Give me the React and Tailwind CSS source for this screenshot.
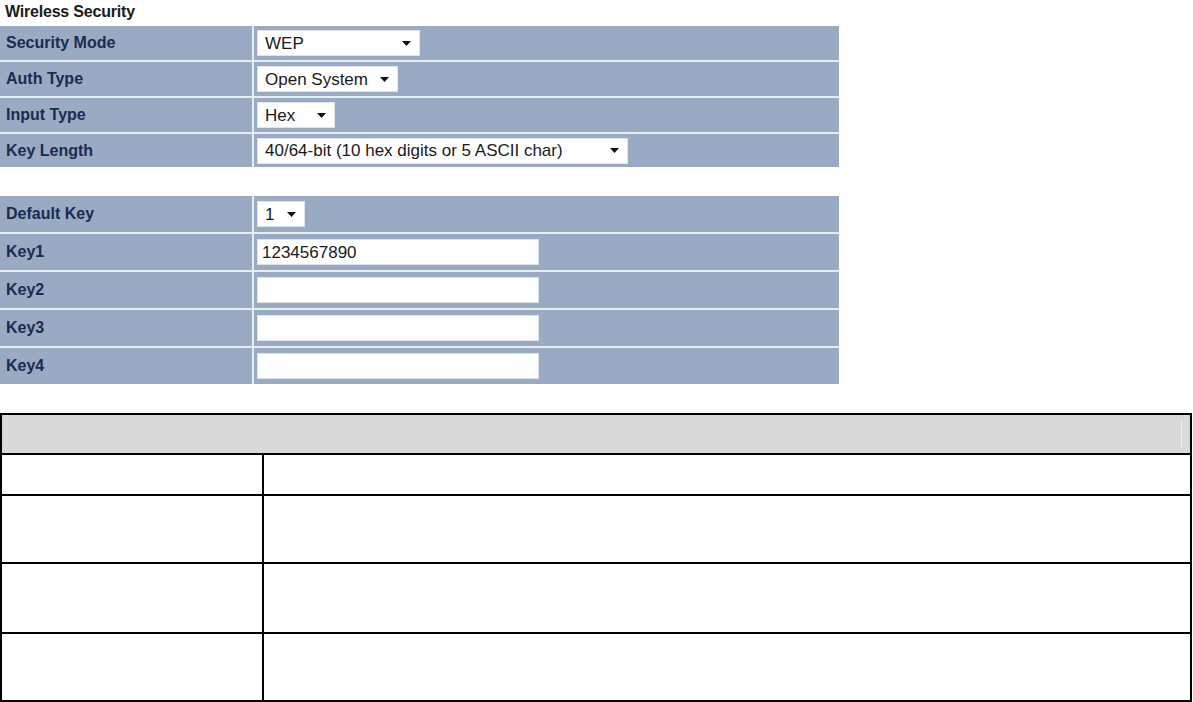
import React from "react";

function Arrow() {
  return (
    <svg width="9" height="5" viewBox="0 0 9 5" className="shrink-0">
      <polygon points="0,0 9,0 4.5,5" fill="#111" />
    </svg>
  );
}

function Select({ text, w }) {
  return (
    <div
      className="h-[26px] bg-white border border-[#dfe3ea] flex items-center justify-between pl-[7px] pr-[8px] text-[17px] text-[#1a1a1a] leading-none"
      style={{ width: w }}
    >
      <span>{text}</span>
      <Arrow />
    </div>
  );
}

function Input({ value }) {
  return (
    <div className="w-[282px] h-[26px] bg-white border border-[#dfe3ea] flex items-center pl-[4px] text-[17px] text-[#1a1a1a] leading-none">
      {value}
    </div>
  );
}

function Row({ label, children, h }) {
  return (
    <div className="flex gap-[2px]" style={{ height: h }}>
      <div className="w-[252px] bg-[#9aaac2] flex items-center pl-[6px] text-[16px] font-bold text-[#1a2b52]">
        {label}
      </div>
      <div className="w-[585px] bg-[#9aaac2] flex items-center pl-[3px]">{children}</div>
    </div>
  );
}

export default function App() {
  return (
    <div
      className="w-[1193px] h-[702px] bg-white overflow-hidden"
      style={{ fontFamily: '"Liberation Sans", Arial, sans-serif' }}
    >
      <div className="h-[26px] pl-[5px] pt-[3px] text-[16px] font-bold text-[#1a1a1a] leading-[18px] tracking-[-0.2px]">
        Wireless Security
      </div>
      <div className="w-[839px] bg-[#e6eef2] flex flex-col gap-[2px]">
        <Row label="Security Mode" h={34}>
          <Select text="WEP" w={163} />
        </Row>
        <Row label="Auth Type" h={34}>
          <Select text="Open System" w={141} />
        </Row>
        <Row label="Input Type" h={34}>
          <Select text="Hex" w={78} />
        </Row>
        <Row label="Key Length" h={33}>
          <Select text="40/64-bit (10 hex digits or 5 ASCII char)" w={371} />
        </Row>
      </div>
      <div className="mt-[29px] w-[839px] bg-[#e6eef2] flex flex-col gap-[2px]">
        <Row label="Default Key" h={36}>
          <Select text="1" w={48} />
        </Row>
        <Row label="Key1" h={36}>
          <Input value="1234567890" />
        </Row>
        <Row label="Key2" h={36}>
          <Input value="" />
        </Row>
        <Row label="Key3" h={36}>
          <Input value="" />
        </Row>
        <Row label="Key4" h={36}>
          <Input value="" />
        </Row>
      </div>
      <div className="mt-[29px] w-[1192px] border-2 border-black">
        <div className="h-[40px] bg-[#d9d9d9] border-b-2 border-black flex justify-end pr-[8px] py-[5px]">
          <div className="w-[1px] bg-[#f2f2f2]" />
        </div>
        <div className="h-[41px] flex border-b-2 border-black">
          <div className="w-[262px] border-r-2 border-black" />
          <div className="flex-1" />
        </div>
        <div className="h-[68px] flex border-b-2 border-black">
          <div className="w-[262px] border-r-2 border-black" />
          <div className="flex-1" />
        </div>
        <div className="h-[70px] flex border-b-2 border-black">
          <div className="w-[262px] border-r-2 border-black" />
          <div className="flex-1" />
        </div>
        <div className="h-[66px] flex">
          <div className="w-[262px] border-r-2 border-black" />
          <div className="flex-1" />
        </div>
      </div>
    </div>
  );
}
